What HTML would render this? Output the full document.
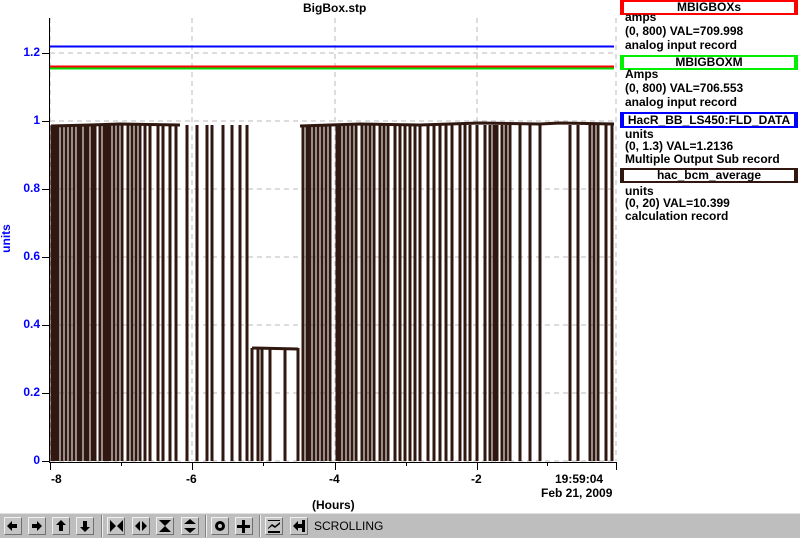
<!DOCTYPE html>
<html><head><style>
body{margin:0;width:800px;height:537px;background:#fff;overflow:hidden;font-family:"Liberation Sans",sans-serif;position:relative}
.t{position:absolute;font-weight:bold;font-size:12px;white-space:nowrap;line-height:13px}
.hd{position:absolute;left:620px;width:170px;height:11px;border-style:solid;border-width:2px 4px;text-align:center;font-weight:bold;font-size:12px;line-height:11px}
.tb{position:absolute;left:0;top:513px;width:800px;height:24px;background:#bebebe;border-top:1px solid #e0e0e0}
.b{position:absolute;top:3px;width:18px;height:18px;background:#c4c4c4;border:1px solid;border-color:#f0f0f0 #707070 #707070 #f0f0f0;box-sizing:border-box}
.sep{position:absolute;top:1px;width:1px;height:22px;background:#808080;border-right:1px solid #f0f0f0}
</style></head><body>
<svg width="800" height="537" style="position:absolute;left:0;top:0">
<g stroke="#bbb" stroke-dasharray="5,4" stroke-width="1">
<line x1="50" y1="53" x2="617" y2="53"/><line x1="50" y1="121" x2="617" y2="121"/><line x1="50" y1="189" x2="617" y2="189"/><line x1="50" y1="257" x2="617" y2="257"/><line x1="50" y1="325" x2="617" y2="325"/><line x1="50" y1="393" x2="617" y2="393"/><line x1="50" y1="461" x2="617" y2="461"/>
<line x1="50" y1="18" x2="50" y2="461"/><line x1="192" y1="18" x2="192" y2="461"/><line x1="335" y1="18" x2="335" y2="461"/><line x1="477" y1="18" x2="477" y2="461"/><line x1="616" y1="18" x2="616" y2="461"/>
</g>
<line x1="50" y1="46.5" x2="614" y2="46.5" stroke="#0000ff" stroke-width="2"/>
<line x1="50" y1="66.5" x2="614" y2="66.5" stroke="#ff0000" stroke-width="2"/>
<line x1="50" y1="68.5" x2="614" y2="68.5" stroke="#00dd00" stroke-width="2"/>
<g stroke="#301810" stroke-width="3" fill="none">
<polyline points="51,126 90,125 120,124 180,125"/>
<polyline points="300,126 360,124 420,125 480,123 540,124 560,123 614,124"/>
<polyline points="252,348 298,349"/>
<path d="M52 125V461M55 125V461M58 125V461M62 125V461M66 125V461M70 125V461M74 125V461M78 125V461M81 125V461M85 125V461M88 125V461M92 125V461M95 125V461M100 125V461M104 125V461M107 125V461M110 125V461M114 125V461M118 125V461M122 125V461M128 125V461M132 125V461M136 125V461M140 125V461M145 125V461M150 125V461M158 125V461M163 125V461M170 125V461M176 125V461M187 125V461M197 125V461M207 125V461M212 125V461M223 125V461M232 125V461M240 125V461M247 125V461M252 348V461M258 348V461M262 348V461M270 348V461M285 348V461M298 348V461M303 125V461M307 125V461M310 125V461M314 125V461M318 125V461M322 125V461M326 125V461M330 125V461M337 125V461M340 125V461M344 125V461M348 125V461M352 125V461M356 125V461M362 125V461M366 125V461M370 125V461M374 125V461M380 125V461M384 125V461M388 125V461M395 125V461M400 125V461M405 125V461M410 125V461M415 125V461M420 125V461M428 125V461M434 125V461M440 125V461M446 125V461M452 125V461M460 125V461M465 125V461M470 125V461M477 125V461M485 125V461M490 125V461M494 125V461M497 125V461M502 125V461M506 125V461M510 125V461M520 125V461M530 125V461M540 125V461M570 125V461M578 125V461M590 125V461M594 125V461M598 125V461M606 125V461M612 125V461"/>
</g>
<g stroke="#000" stroke-width="1">
<line x1="49.5" y1="18" x2="49.5" y2="462"/><line x1="49" y1="462.5" x2="617" y2="462.5"/>
<line x1="42" y1="53.5" x2="49" y2="53.5"/><line x1="42" y1="121.5" x2="49" y2="121.5"/><line x1="42" y1="189.5" x2="49" y2="189.5"/><line x1="42" y1="257.5" x2="49" y2="257.5"/><line x1="42" y1="325.5" x2="49" y2="325.5"/><line x1="42" y1="393.5" x2="49" y2="393.5"/><line x1="42" y1="461.5" x2="49" y2="461.5"/>
<line x1="50.5" y1="462" x2="50.5" y2="470"/><line x1="192.5" y1="462" x2="192.5" y2="470"/><line x1="335.5" y1="462" x2="335.5" y2="470"/><line x1="477.5" y1="462" x2="477.5" y2="470"/><line x1="616.5" y1="462" x2="616.5" y2="470"/>
<line x1="121.5" y1="462" x2="121.5" y2="466"/><line x1="263.5" y1="462" x2="263.5" y2="466"/><line x1="406.5" y1="462" x2="406.5" y2="466"/><line x1="547.5" y1="462" x2="547.5" y2="466"/>
</g>
</svg>
<div class="t" style="left:303px;top:2px">BigBox.stp</div>
<div class="t" style="left:-8px;top:232px;color:#0000ff;transform:rotate(-90deg)">units</div>
<div class="t" style="left:0;width:40px;text-align:right;color:#0000ff;top:46px">1.2</div>
<div class="t" style="left:0;width:40px;text-align:right;color:#0000ff;top:114px">1</div>
<div class="t" style="left:0;width:40px;text-align:right;color:#0000ff;top:182px">0.8</div>
<div class="t" style="left:0;width:40px;text-align:right;color:#0000ff;top:250px">0.6</div>
<div class="t" style="left:0;width:40px;text-align:right;color:#0000ff;top:318px">0.4</div>
<div class="t" style="left:0;width:40px;text-align:right;color:#0000ff;top:386px">0.2</div>
<div class="t" style="left:0;width:40px;text-align:right;color:#0000ff;top:454px">0</div>
<div class="t" style="left:51px;top:473px">-8</div>
<div class="t" style="left:186px;top:473px">-6</div>
<div class="t" style="left:329px;top:473px">-4</div>
<div class="t" style="left:471px;top:473px">-2</div>
<div class="t" style="left:555px;top:473px">19:59:04</div>
<div class="t" style="left:541px;top:487px">Feb 21, 2009</div>
<div class="t" style="left:312px;top:499px">(Hours)</div>
<div class="hd" style="top:0;border-color:#ff0000">MBIGBOXs</div>
<div class="t" style="left:625px;top:11px">amps</div>
<div class="t" style="left:625px;top:25px">(0, 800) VAL=709.998</div>
<div class="t" style="left:625px;top:39px">analog input record</div>
<div class="hd" style="top:55px;border-color:#00ee00">MBIGBOXM</div>
<div class="t" style="left:625px;top:68px">Amps</div>
<div class="t" style="left:625px;top:82px">(0, 800) VAL=706.553</div>
<div class="t" style="left:625px;top:96px">analog input record</div>
<div class="hd" style="top:112px;border-color:#0000ff;height:12px;line-height:12px">HacR_BB_LS450:FLD_DATA</div>
<div class="t" style="left:625px;top:128px">units</div>
<div class="t" style="left:625px;top:140px">(0, 1.3) VAL=1.2136</div>
<div class="t" style="left:625px;top:153px">Multiple Output Sub record</div>
<div class="hd" style="top:168px;border-color:#301810">hac_bcm_average</div>
<div class="t" style="left:625px;top:185px">units</div>
<div class="t" style="left:625px;top:197px">(0, 20) VAL=10.399</div>
<div class="t" style="left:625px;top:210px">calculation record</div>
<div class="tb">
<div class="b" style="left:4px"></div><div class="b" style="left:28px"></div><div class="b" style="left:52px"></div><div class="b" style="left:76px"></div>
<div class="sep" style="left:101px"></div>
<div class="b" style="left:107px"></div><div class="b" style="left:132px"></div><div class="b" style="left:156px"></div><div class="b" style="left:181px"></div>
<div class="sep" style="left:205px"></div>
<div class="b" style="left:211px"></div><div class="b" style="left:235px"></div>
<div class="sep" style="left:259px"></div>
<div class="b" style="left:265px"></div><div class="b" style="left:290px"></div>
<svg width="320" height="24" style="position:absolute;left:0;top:0" fill="#000">
<path d="M7 12l5-5v3h5v4h-5v3z"/>
<path d="M42 12l-5-5v3h-5v4h5v3z"/>
<path d="M61 6l5 5h-3v6h-4v-6h-3z"/>
<path d="M85 18l5-5h-3v-6h-4v6h-3z"/>
<path d="M110 6l6 6-6 6zM123 6l-6 6 6 6z"/>
<path d="M140 7l-5 5 5 5zM142 7l5 5-5 5z"/>
<path d="M159 6h12l-6 6zM159 18h12l-6-6z"/>
<path d="M184 10l6-5 6 5zM184 14h12l-6 5z"/>
<circle cx="220" cy="12" r="5"/><circle cx="220" cy="12" r="2" fill="#c4c4c4"/>
<path d="M242 6h3v5h5v3h-5v5h-3v-5h-5v-3h5z"/>
<path d="M268 6h12v1h-12zM268 17h12v2h-12zM268 14l4-4 3 2 5-4v2l-5 4-3-2-4 3z"/>
<path d="M302 6h3v12h-3zM293 12l5-5v3h4v4h-4v3z"/>
</svg>
<div style="position:absolute;left:314px;top:5px;font-size:12px">SCROLLING</div>
</div>
</body></html>
